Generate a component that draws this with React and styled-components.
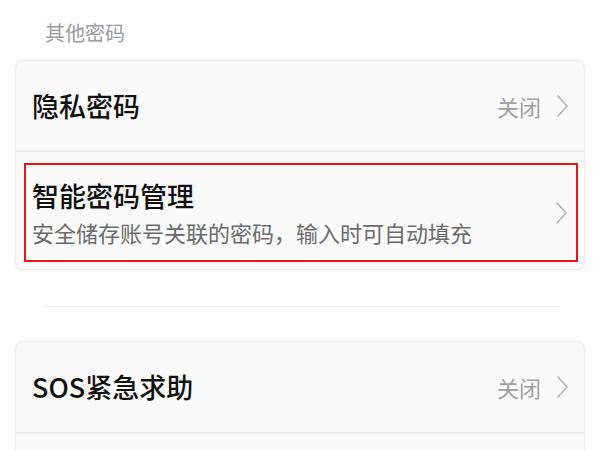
import React from "react";
import styled, { createGlobalStyle } from "styled-components";

const GlobalStyle = createGlobalStyle`
  html, body {
    margin: 0;
    padding: 0;
    background: #ffffff;
    font-family: "Noto Sans CJK SC", "Noto Sans", sans-serif;
  }
`;

const Page = styled.div`
  width: 600px;
  padding: 0 15px;
  box-sizing: border-box;
`;

const SectionTitle = styled.div`
  padding: 20px 0 0 30px;
  height: 26px;
  line-height: 26px;
  margin-bottom: 14px;
  font-size: 20px;
  color: #9a9ba1;
`;

const Card = styled.div`
  background: #fafafa;
  border: 1px solid #ececec;
  border-radius: 8px;
  box-shadow: 0 1px 3px rgba(0, 0, 0, 0.06);
  overflow: hidden;
`;

const Row = styled.div`
  display: flex;
  align-items: center;
  height: ${(p) => p.$height || 90}px;
  padding: 0 16px;
  border-top: ${(p) => (p.$first ? "none" : "1px solid #e6e6e6")};
  box-sizing: border-box;
`;

const HighlightWrap = styled.div`
  border-top: 1px solid #e6e6e6;
  padding: 11px 6px 7px 8px;
`;

const HighlightBox = styled.div`
  display: flex;
  align-items: center;
  border: 2px solid #e8141b;
  padding: 14px 9px 13px 6px;
`;

const Texts = styled.div`
  flex: 1;
  display: flex;
  flex-direction: column;
`;

const Title = styled.div`
  font-size: 27px;
  font-weight: 500;
  color: #111111;
  line-height: 34px;
`;

const Sub = styled.div`
  margin-top: 4px;
  font-size: 22px;
  color: #6b6b6b;
  line-height: 30px;
`;

const Value = styled.span`
  font-size: 22px;
  color: #a0a0a0;
  margin-right: 15px;
`;

const Divider = styled.div`
  height: 1px;
  background: #e9e9e9;
  margin: 36px 25px 34px 30px;
`;

const Chevron = () => (
  <svg width="12" height="22" viewBox="0 0 12 22" fill="none">
    <polyline
      points="2,1 11,11 2,21"
      stroke="#b4b4b4"
      strokeWidth="1.6"
      strokeLinejoin="round"
      strokeLinecap="round"
    />
  </svg>
);

export default function App() {
  return (
    <Page>
      <GlobalStyle />
      <SectionTitle>其他密码</SectionTitle>
      <Card>
        <Row $first>
          <Texts>
            <Title>隐私密码</Title>
          </Texts>
          <Value>关闭</Value>
          <Chevron />
        </Row>
        <HighlightWrap>
          <HighlightBox>
            <Texts>
              <Title>智能密码管理</Title>
              <Sub>安全储存账号关联的密码，输入时可自动填充</Sub>
            </Texts>
            <Chevron />
          </HighlightBox>
        </HighlightWrap>
      </Card>
      <Divider />
      <Card>
        <Row $first>
          <Texts>
            <Title>SOS紧急求助</Title>
          </Texts>
          <Value>关闭</Value>
          <Chevron />
        </Row>
        <Row />
      </Card>
    </Page>
  );
}
